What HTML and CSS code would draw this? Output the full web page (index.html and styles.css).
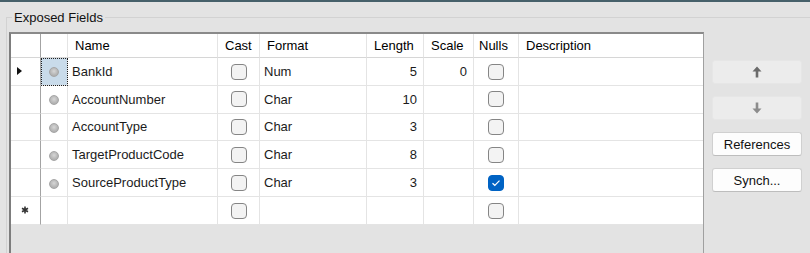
FILE: index.html
```html
<!DOCTYPE html>
<html lang="en">
<head>
  <meta charset="UTF-8">
  <title>Exposed Fields</title>
  <link rel="stylesheet" href="styles.css">
</head>
<body>
  <div class="topbar"></div>

  <fieldset class="group">
    <legend>Exposed Fields</legend>
    <div class="group-body">

      <!-- Data grid -->
      <div class="grid">
        <table>
          <colgroup>
            <col class="c-rowhdr"><col class="c-ind"><col class="c-name"><col class="c-cast">
            <col class="c-format"><col class="c-len"><col class="c-scale"><col class="c-nulls"><col class="c-desc">
          </colgroup>
          <thead>
            <tr>
              <th class="rowhdr"></th>
              <th></th>
              <th>Name</th>
              <th>Cast</th>
              <th>Format</th>
              <th>Length</th>
              <th>Scale</th>
              <th class="narrow">Nulls</th>
              <th class="last">Description</th>
            </tr>
          </thead>
          <tbody>
            <tr>
              <td class="rowhdr"><span class="pointer"></span></td>
              <td class="ind selected"><span class="dot"></span></td>
              <td>BankId</td>
              <td class="chk"><span class="box"></span></td>
              <td>Num</td>
              <td class="num">5</td>
              <td class="num">0</td>
              <td class="chk"><span class="box"></span></td>
              <td class="last"></td>
            </tr>
            <tr>
              <td class="rowhdr"></td>
              <td class="ind"><span class="dot"></span></td>
              <td>AccountNumber</td>
              <td class="chk"><span class="box"></span></td>
              <td>Char</td>
              <td class="num">10</td>
              <td class="num"></td>
              <td class="chk"><span class="box"></span></td>
              <td class="last"></td>
            </tr>
            <tr>
              <td class="rowhdr"></td>
              <td class="ind"><span class="dot"></span></td>
              <td>AccountType</td>
              <td class="chk"><span class="box"></span></td>
              <td>Char</td>
              <td class="num">3</td>
              <td class="num"></td>
              <td class="chk"><span class="box"></span></td>
              <td class="last"></td>
            </tr>
            <tr>
              <td class="rowhdr"></td>
              <td class="ind"><span class="dot"></span></td>
              <td>TargetProductCode</td>
              <td class="chk"><span class="box"></span></td>
              <td>Char</td>
              <td class="num">8</td>
              <td class="num"></td>
              <td class="chk"><span class="box"></span></td>
              <td class="last"></td>
            </tr>
            <tr>
              <td class="rowhdr"></td>
              <td class="ind"><span class="dot"></span></td>
              <td>SourceProductType</td>
              <td class="chk"><span class="box"></span></td>
              <td>Char</td>
              <td class="num">3</td>
              <td class="num"></td>
              <td class="chk">
                <span class="box checked">
                  <svg width="10" height="8" viewBox="0 0 10 8"><path d="M1.5 4.2 L3.8 6.3 L8.5 1.6" fill="none" stroke="#fff" stroke-width="1.2"/></svg>
                </span>
              </td>
              <td class="last"></td>
            </tr>
            <tr>
              <td class="rowhdr">
                <svg class="star" width="8" height="8" viewBox="0 0 8 8"><path d="M4 0.5 V7.5 M1 2.2 L7 5.8 M7 2.2 L1 5.8" stroke="#333" stroke-width="1.6"/></svg>
              </td>
              <td class="ind"></td>
              <td></td>
              <td class="chk"><span class="box"></span></td>
              <td></td>
              <td class="num"></td>
              <td class="num"></td>
              <td class="chk"><span class="box"></span></td>
              <td class="last"></td>
            </tr>
          </tbody>
        </table>
      </div>

      <!-- Side buttons -->
      <div class="side">
        <button class="btn disabled">
          <svg width="10" height="12" viewBox="0 0 10 12"><path d="M5 0.5 L9.5 5.5 H6.3 V11.5 H3.7 V5.5 H0.5 Z" fill="#6b6b6b"/></svg>
        </button>
        <button class="btn disabled">
          <svg width="10" height="12" viewBox="0 0 10 12"><path d="M5 11.5 L9.5 6.5 H6.3 V0.5 H3.7 V6.5 H0.5 Z" fill="#8c8c8c"/></svg>
        </button>
        <button class="btn">References</button>
        <button class="btn">Synch...</button>
      </div>

    </div>
  </fieldset>
</body>
</html>
```

FILE: styles.css
```css
body {
  margin: 0;
  background-color: #e3e3e3;
  font-family: "Liberation Sans", Arial, sans-serif;
  font-size: 13px;
  color: #1b1b1b;
  height: 253px;
  overflow: hidden;
}
.topbar {
  height: 2px;
  background-color: #46606a;
}

/* Group box */
.group {
  margin: 8px 0 0 6px;
  padding: 7px 0 0 2px;
  border: 1px solid #d2d2d2;
  border-right: none;
  border-bottom: none;
  min-width: 0;
}
.group legend {
  margin-left: 3px;
  padding: 0 2px;
  line-height: 15px;
  color: #111;
}
.group-body {
  display: flex;
  align-items: flex-start;
}

/* Grid */
.grid {
  width: 692px;
  height: 219px;
  border-left: 2px solid #7d7d7d;
  border-top: 2px solid #8a8a8a;
  border-right: 1px solid #a0a0a0;
  background-color: #e3e3e3;
  flex-shrink: 0;
  overflow: hidden;
}
.grid table {
  width: 692px;
  table-layout: fixed;
  border-collapse: separate;
  border-spacing: 0;
  background-color: #fff;
}
.c-rowhdr { width: 30px; }
.c-ind { width: 27px; }
.c-name { width: 150px; }
.c-cast { width: 42px; }
.c-format { width: 107px; }
.c-len { width: 57px; }
.c-scale { width: 50px; }
.c-nulls { width: 45px; }
.c-desc { width: 184px; }

.grid th,
.grid td {
  box-sizing: border-box;
  border-right: 1px solid #e4e4e4;
  border-bottom: 1px solid #e4e4e4;
  padding: 0 4px;
  white-space: nowrap;
  overflow: hidden;
}
.grid th {
  height: 24px;
  font-weight: normal;
  text-align: left;
  color: #000;
  padding-left: 7px;
  border-bottom-color: #d6d6d6;
}
.grid th.narrow {
  padding-left: 5px;
}
.grid td {
  height: 27.8px;
}
.grid .last {
  border-right: none;
}
.grid .rowhdr {
  border-right-color: #a3a3a3;
  padding: 0 0 0 6px;
}
.grid td.num {
  text-align: right;
  padding-right: 6px;
}
.grid td.chk {
  text-align: center;
  padding: 0;
}
.grid td.ind {
  text-align: center;
  padding: 0;
}
.grid td.selected {
  background-color: #c9dbea;
  outline: 1px dotted #222;
  outline-offset: -1px;
}

.pointer {
  display: block;
  width: 0;
  height: 0;
  border-top: 4px solid transparent;
  border-bottom: 4px solid transparent;
  border-left: 5px solid #111;
}
.star {
  display: block;
  margin-left: 4px;
}
.dot {
  display: inline-block;
  box-sizing: border-box;
  width: 10px;
  height: 10px;
  border-radius: 50%;
  border: 1px solid #a6a6a6;
  background: radial-gradient(circle at 50% 40%, #d6d6d6 0, #b8b8b8 55%, #a4a4a4 100%);
  vertical-align: middle;
}
.box {
  display: inline-flex;
  align-items: center;
  justify-content: center;
  box-sizing: border-box;
  width: 16px;
  height: 16px;
  border: 1px solid #858585;
  border-radius: 4px;
  background-color: #f3f3f3;
  vertical-align: middle;
}
.box.checked {
  background-color: #0063c4;
  border-color: #0063c4;
}

/* Buttons */
.side {
  display: flex;
  flex-direction: column;
  gap: 12px;
  margin: 28px 0 0 8px;
}
.btn {
  box-sizing: border-box;
  width: 90px;
  height: 24px;
  padding: 0;
  font-family: "Liberation Sans", Arial, sans-serif;
  font-size: 13px;
  color: #111;
  background-color: #fdfdfd;
  border: 1px solid #d0d0d0;
  border-bottom-color: #bdbdbd;
  border-radius: 3px;
  display: flex;
  align-items: center;
  justify-content: center;
}
.btn.disabled {
  background-color: #ececec;
  border-color: #e6e6e6;
}
```
